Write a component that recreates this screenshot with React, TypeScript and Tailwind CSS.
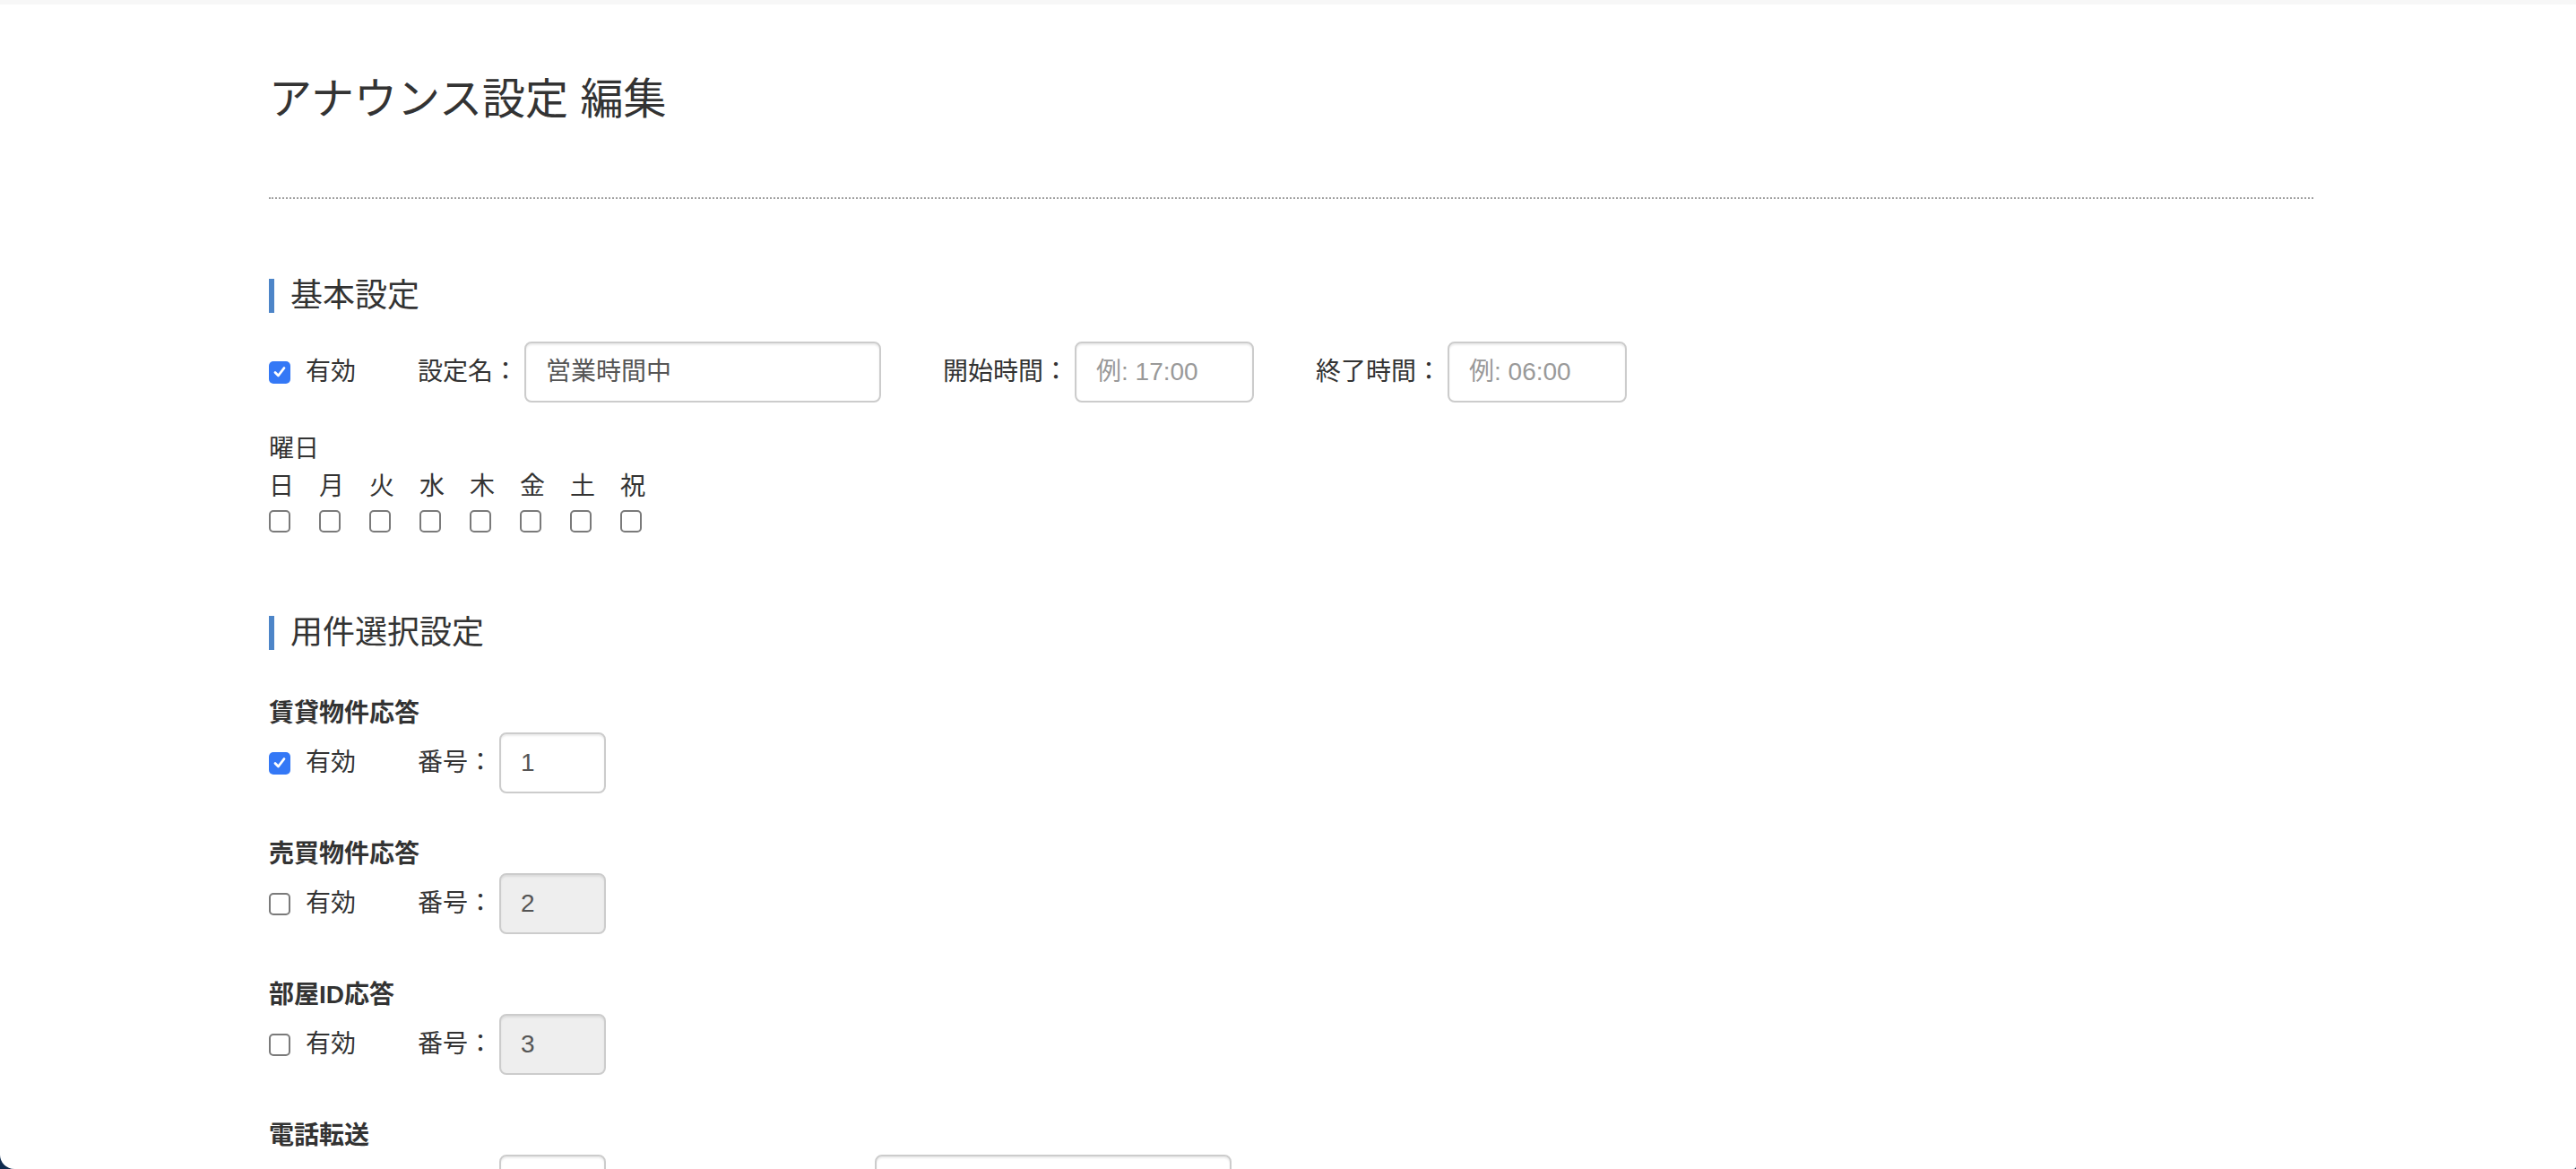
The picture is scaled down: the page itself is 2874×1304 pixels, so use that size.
import React from "react";

const FONT = { fontFamily: '"Liberation Sans", "Noto Sans CJK JP", sans-serif' };

function Check({ checked }: { checked?: boolean }) {
  if (checked) {
    return (
      <span className="flex h-[25px] w-[24px] shrink-0 items-center justify-center rounded-[5px] bg-[#3478f6]">
        <svg width="16" height="16" viewBox="0 0 16 16" fill="none">
          <path d="M3 8.5 L6.5 12 L13 3.5" stroke="white" strokeWidth="2.8" strokeLinecap="round" strokeLinejoin="round" />
        </svg>
      </span>
    );
  }
  return <span className="block h-[25px] w-[24px] shrink-0 rounded-[5px] border-2 border-[#7a7a7a] bg-white" />;
}

function Input({ w, value, placeholder, disabled }: { w: string; value?: string; placeholder?: string; disabled?: boolean }) {
  return (
    <div
      className={`${w} flex h-[68px] shrink-0 items-center rounded-[8px] border-2 border-[#cccccc] px-[22px] text-[28px] shadow-[inset_0_2px_2px_rgba(0,0,0,0.08)] ${
        disabled ? "bg-[#eeeeee]" : "bg-white"
      }`}
    >
      {value ? <span className="text-[#555555]">{value}</span> : <span className="text-[#999999]">{placeholder}</span>}
    </div>
  );
}

function Enabled({ checked }: { checked?: boolean }) {
  return (
    <div className="mr-[69px] flex items-center">
      <Check checked={checked} />
      <span className="ml-[17px] text-[28px]">有効</span>
    </div>
  );
}

function Labeled({ label, children }: { label: string; children: React.ReactNode }) {
  return (
    <div className="mr-[69px] flex items-center">
      <span className="mr-[7px] text-[28px]">{label}</span>
      {children}
    </div>
  );
}

function SectionHeader({ title }: { title: string }) {
  return (
    <div className="flex h-[38px] items-center">
      <div className="h-[38px] w-[6px] bg-[#4d85c8]" />
      <span className="ml-[18px] text-[36px] leading-[38px]">{title}</span>
    </div>
  );
}

function Group({ title, checked, num, disabled }: { title: string; checked?: boolean; num: string; disabled?: boolean }) {
  return (
    <div>
      <div className="h-[42px] text-[28px] font-bold leading-[42px]">{title}</div>
      <div className="flex items-center">
        <Enabled checked={checked} />
        <Labeled label="番号：">
          <Input w="w-[119px]" value={num} disabled={disabled} />
        </Labeled>
      </div>
    </div>
  );
}

export default function App() {
  const days = ["日", "月", "火", "水", "木", "金", "土", "祝"];
  return (
    <div className="h-[1304px] w-full overflow-hidden bg-[#0f2b4e]" style={FONT}>
      <div className="flex h-full flex-col overflow-hidden rounded-bl-[16px] rounded-br-[3px] bg-white text-[#333333]">
        <div className="h-[5px] shrink-0 bg-[#f7f7f7]" />
        <div className="pl-[300px] pr-[293px]">
          <h1 className="mt-[82px] text-[48px] font-normal leading-[48px]">アナウンス設定 編集</h1>
          <div className="mt-[85px] border-b-2 border-dotted border-[#a0a0a0]" />

          <div className="mt-[89px]">
            <SectionHeader title="基本設定" />
          </div>

          <div className="mt-[32px] flex items-center">
            <Enabled checked />
            <Labeled label="設定名：">
              <Input w="w-[398px]" value="営業時間中" />
            </Labeled>
            <Labeled label="開始時間：">
              <Input w="w-[200px]" placeholder="例: 17:00" />
            </Labeled>
            <Labeled label="終了時間：">
              <Input w="w-[200px]" placeholder="例: 06:00" />
            </Labeled>
          </div>

          <div className="mt-[31px] text-[28px] leading-[42px]">曜日</div>
          <div className="flex gap-[28px] text-[28px] leading-[42px]">
            {days.map((d) => (
              <span key={d} className="w-[28px]">
                {d}
              </span>
            ))}
          </div>
          <div className="mt-[5px] flex gap-[32px]">
            {days.map((d) => (
              <Check key={d} />
            ))}
          </div>

          <div className="mt-[93px]">
            <SectionHeader title="用件選択設定" />
          </div>

          <div className="mt-[50px] flex flex-col gap-[47px]">
            <Group title="賃貸物件応答" checked num="1" />
            <Group title="売買物件応答" num="2" disabled />
            <Group title="部屋ID応答" num="3" disabled />
            <div>
              <div className="h-[42px] text-[28px] font-bold leading-[42px]">電話転送</div>
              <div className="flex items-center">
                <Enabled />
                <Labeled label="番号：">
                  <Input w="w-[119px]" value="" />
                </Labeled>
                <Labeled label="転送先電話番号：">
                  <Input w="w-[398px]" value="" />
                </Labeled>
              </div>
            </div>
          </div>
        </div>
      </div>
    </div>
  );
}
